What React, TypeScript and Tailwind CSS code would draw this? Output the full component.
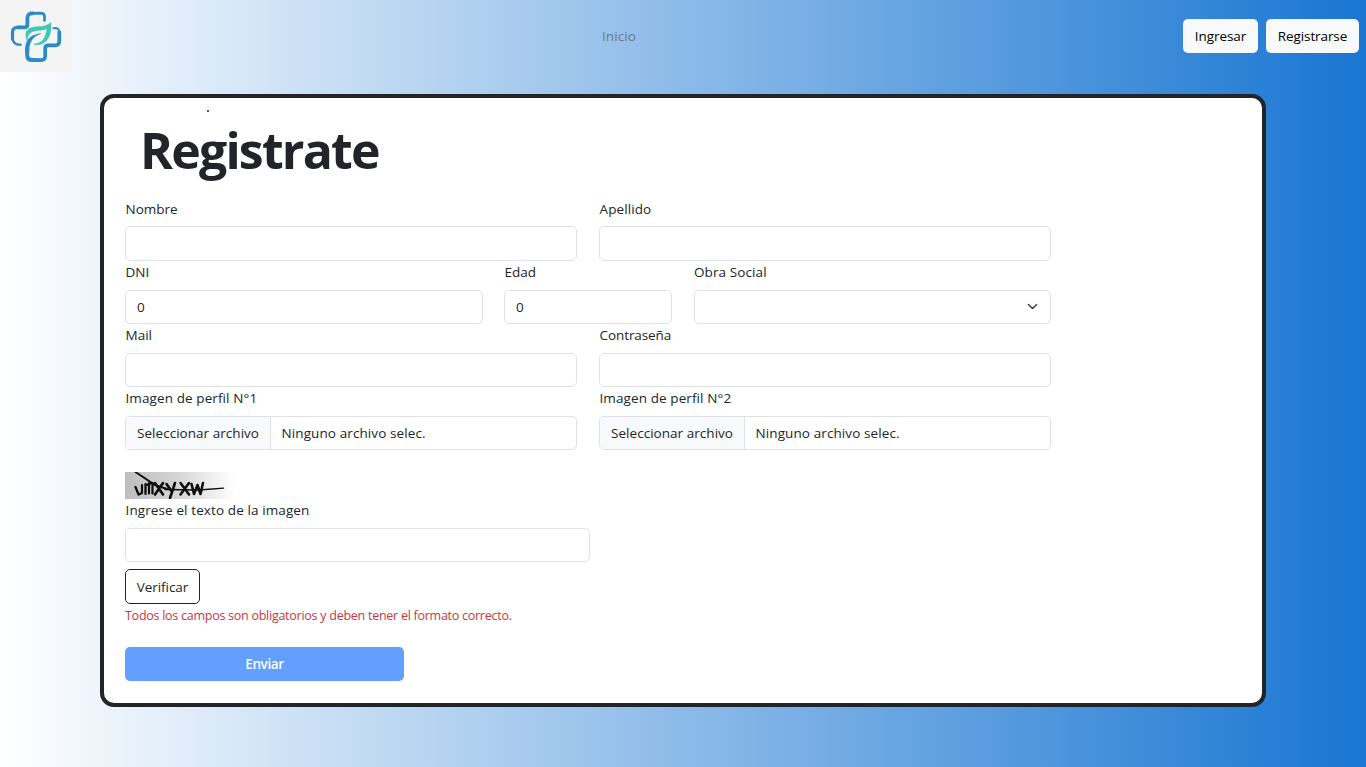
import type { ReactNode } from 'react';

function Logo() {
  return (
    <div className="size-[72px] shrink-0 bg-[#f4f4f4]">
      <svg viewBox="0 0 72 72" className="size-full" fill="none" strokeLinecap="round" strokeLinejoin="round">
        <g stroke="#2b8ac8">
          <path d="M44.500 20.500V16.500Q44.500 13.500 41 13.200L31 13.400" strokeWidth="2.700" />
          <path d="M33 13.400Q27.600 13 27.400 18V24.500Q27.400 27.300 24.500 27.300H18" strokeWidth="3.800" />
          <path d="M20 27.300Q12.600 26.800 12.500 32V39" strokeWidth="3.200" />
          <path d="M12.500 37Q12.300 44.800 20.500 44.800" strokeWidth="2.400" />
          <path d="M53.500 28.200Q59 27 59.300 32" strokeWidth="2.100" />
          <path d="M59.300 32V41Q59.200 45.300 55.500 45.300H48Q45.200 45.500 45.200 48V56.500Q45 60.200 41 60.200H32" strokeWidth="3.700" />
          <path d="M36 60H32Q27.500 60 27.200 55.500V48" strokeWidth="3.900" />
        </g>
        <path d="M25.300 54C24.800 46 25 34.500 42 33.300C34 36.500 29.400 40 29.200 51Z" fill="#2b8ac8" />
        <path d="M27.200 40.500C23 29 30 27 39 26.700C45 26.500 48 25 50.700 22.400C52.500 37 45 46.500 34 44.300C42 43.500 46 38 47 28.500C43 31 37 29.500 32.500 31.500C28.500 33.500 27.500 36.500 27.200 40.500Z" fill="#42c6b1" stroke="#42c6b1" strokeWidth="0.700" />
      </svg>
    </div>
  );
}

function Field({ label, className, labelClass = '', children }: { label: string; className: string; labelClass?: string; children: ReactNode }) {
  return (
    <div className={`h-[63.25px] ${className}`}>
      <label className={`mb-[7.6px] block h-[21.25px] whitespace-nowrap pl-[0.5px] leading-[22px] ${labelClass}`}>{label}</label>
      {children}
    </div>
  );
}

const control = 'block h-[34.4px] w-full rounded-[5px] border border-[#dee2e6] bg-white px-[11px] outline-none';

function FileInput() {
  return (
    <div className="flex h-[34.4px] w-full items-center overflow-hidden rounded-[5px] border border-[#dee2e6] bg-white">
      <span className="flex h-full w-[144.5px] shrink-0 items-center whitespace-nowrap border-r border-[#dee2e6] bg-[#f8f9fa] pl-[11px] tracking-[0.04px]">Seleccionar archivo</span>
      <span className="whitespace-nowrap pl-[11px] tracking-[0.1px]">Ninguno archivo selec.</span>
    </div>
  );
}

function Captcha() {
  return (
    <svg viewBox="0 0 110 27" className="block h-[27px] w-[110px]" fill="none" strokeLinecap="round" strokeLinejoin="round">
      <defs>
        <linearGradient id="fade" gradientUnits="userSpaceOnUse" x1="0" y1="8" x2="109" y2="0">
          <stop stopColor="#bebebe" />
          <stop offset="0.45" stopColor="#d3d3d3" />
          <stop offset="0.8" stopColor="#efefef" />
          <stop offset="1" stopColor="#ffffff" />
        </linearGradient>
        <filter id="ink">
          <feGaussianBlur stdDeviation="0.5" />
        </filter>
      </defs>
      <rect width="110" height="27" fill="url(#fade)" />
      <g stroke="#0a0a0a" filter="url(#ink)">
        <path d="M10.500 0L30 13L42 17" strokeWidth="2" />
        <path d="M40 17.500L74 18L98.500 16.200" strokeWidth="1.300" />
        <path d="M10.500 15L13.500 22.500L17 21V13M20.500 12V22M24 11V21.500M21 13L27.500 11V21.500" strokeWidth="2.200" />
        <path d="M30 11L38 22.500M38 11L30 22.500M41.500 12L46.500 19M50 11L45 26" strokeWidth="2.600" />
        <path d="M55.500 11L64 22.500M64 11L55.500 22.500M66.500 12L69 22L72.500 13L75.500 22L78 11" strokeWidth="2.500" />
      </g>
    </svg>
  );
}

export default function App() {
  return (
    <div className="h-[767px] overflow-hidden bg-[linear-gradient(to_right,#ffffff,#1976d2)] font-['Open_Sans','Noto_Sans',sans-serif] text-[13.5px] text-[#212529]">
      <header className="flex h-[72px] items-center pr-[7px]">
        <Logo />
        <nav className="flex flex-1 justify-center">
          <a className="mr-[17px] tracking-[0.1px] text-[#6b7a89]">Inicio</a>
        </nav>
        <div className="flex gap-2 text-black">
          <button className="h-[34px] w-[75px] rounded-[5px] bg-[#f8f9fa] tracking-[-0.05px]">Ingresar</button>
          <button className="h-[34px] w-[93px] rounded-[5px] bg-[#f8f9fa] tracking-[-0.1px]">Registrarse</button>
        </div>
      </header>
      <main className="mx-[100px] mt-[22px] h-[613px] rounded-[14px] border-4 border-[#212529] bg-white pl-[21px]">
        <div className="ml-[82px] mt-[12px] size-[2px] rounded-full bg-[#10107a]" />
        <h1 className="ml-[15px] mt-[3.45px] h-[82px] text-[50px] font-bold leading-[70px] tracking-[-1.8px]">Registrate</h1>
        <form className="w-[926px]">
          <div className="flex gap-[22px]">
            <Field label="Nombre" className="w-[452px]" labelClass="pt-[0.5px]"><input className={control} /></Field>
            <Field label="Apellido" className="w-[452px]" labelClass="pt-[0.5px] tracking-[0.1px]"><input className={control} /></Field>
          </div>
          <div className="flex gap-[21.5px]">
            <Field label="DNI" className="w-[357.500px]"><input className={control} defaultValue="0" /></Field>
            <Field label="Edad" className="w-[168px]"><input className={control} defaultValue="0" /></Field>
            <Field label="Obra Social" className="w-[357.500px]" labelClass="tracking-[0.1px]">
              <div className={`${control} flex items-center justify-end`}>
                <svg viewBox="0 0 16 16" className="mr-[1.5px] size-[11px]" fill="none" stroke="#343a40" strokeWidth="2" strokeLinecap="round" strokeLinejoin="round">
                  <path d="m2 5 6 6 6-6" />
                </svg>
              </div>
            </Field>
          </div>
          <div className="flex gap-[22px]">
            <Field label="Mail" className="w-[452px]"><input className={control} /></Field>
            <Field label="Contraseña" className="w-[452px]" labelClass="tracking-[-0.08px]"><input className={control} /></Field>
          </div>
          <div className="flex gap-[22px]">
            <Field label="Imagen de perfil N°1" className="w-[452px]" labelClass="tracking-[0.1px]"><FileInput /></Field>
            <Field label="Imagen de perfil N°2" className="w-[452px]" labelClass="tracking-[0.1px]"><FileInput /></Field>
          </div>
          <div className="mt-[21.5px]">
            <Captcha />
          </div>
          <Field label="Ingrese el texto de la imagen" className="w-[465px]" labelClass="tracking-[0.11px]"><input className={control} /></Field>
          <button type="button" className="mt-[7px] block h-[35px] w-[75px] rounded-[5px] border border-[#212529] tracking-[-0.05px]">Verificar</button>
          <p className="h-[22px] whitespace-nowrap text-[12.5px] leading-[23px] tracking-[-0.26px] text-[#c93545]">Todos los campos son obligatorios y deben tener el formato correcto.</p>
          <button type="button" className="mt-[21px] block h-[34px] w-[279px] rounded-[5px] bg-[#629ffe] font-semibold tracking-[-0.4px] text-white">Enviar</button>
        </form>
      </main>
    </div>
  );
}
